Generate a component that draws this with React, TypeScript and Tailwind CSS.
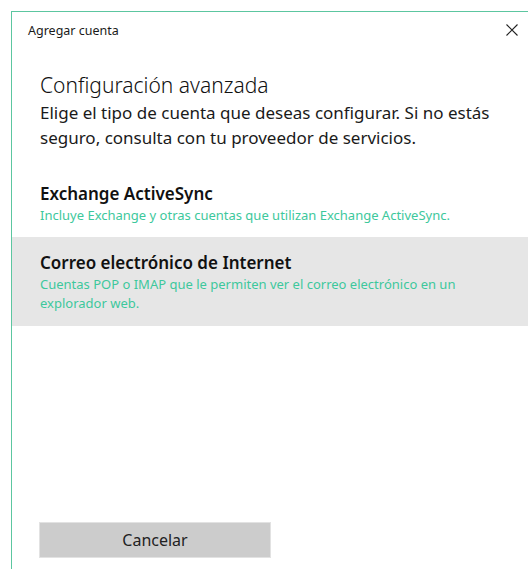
import React from 'react';

const font = { fontFamily: '"Noto Sans", "Open Sans", Arial, sans-serif' };

type AccountOption = {
  title: string;
  description: string;
  selected?: boolean;
};

const options: AccountOption[] = [
  {
    title: 'Exchange ActiveSync',
    description: 'Incluye Exchange y otras cuentas que utilizan Exchange ActiveSync.',
  },
  {
    title: 'Correo electrónico de Internet',
    description:
      'Cuentas POP o IMAP que le permiten ver el correo electrónico en un explorador web.',
    selected: true,
  },
];

const CloseIcon = () => (
  <svg width="12" height="12" viewBox="0 0 12 12" fill="none">
    <path d="M0.5 0.5L11.5 11.5M11.5 0.5L0.5 11.5" stroke="#222" strokeWidth="1.1" />
  </svg>
);

export default function App() {
  return (
    <div className="w-[528px] h-[569px] bg-white pl-[11px] pt-[11px] overflow-hidden" style={font}>
      <div className="h-full border-l border-t border-[#5cc6a0] flex flex-col">
        {/* Title bar */}
        <div className="h-[37px] flex items-start justify-between pl-4 pr-[10px] pt-[10px]">
          <span className="text-[12.5px] leading-[17px] text-[#1a1a1a]">Agregar cuenta</span>
          <span className="mt-[2px]">
            <CloseIcon />
          </span>
        </div>

        {/* Heading */}
        <div className="pl-[28px] pr-6 pt-[23px]">
          <h1 className="text-[21px] leading-[26px] font-light text-[#111]">Configuración avanzada</h1>
          <p className="mt-[2px] text-[17px] leading-[25px] text-[#1a1a1a]">
            Elige el tipo de cuenta que deseas configurar. Si no estás seguro, consulta con tu
            proveedor de servicios.
          </p>
        </div>

        {/* Account types */}
        <div className="mt-[32px] flex flex-col">
          {options.map((opt) => (
            <div
              key={opt.title}
              className={`pl-[28px] pr-10 ${
                opt.selected ? 'bg-[#e6e6e6] pt-[14px] pb-[13px]' : 'pb-[13px]'
              }`}
            >
              <div className="text-[17px] leading-[23px] font-semibold text-[#111]">{opt.title}</div>
              <div
                className={`mt-px text-[13px] text-[#3dc89c] ${
                  opt.selected ? 'leading-[19px]' : 'leading-[18px]'
                }`}
              >
                {opt.description}
              </div>
            </div>
          ))}
        </div>

        <div className="flex-1" />

        {/* Footer */}
        <div className="pl-[27px] pb-[11px]">
          <button
            type="button"
            className="w-[232px] h-[36px] bg-[#cccccc] border border-[#e2e2e2] text-[16px] leading-none text-[#222]"
          >
            Cancelar
          </button>
        </div>
      </div>
    </div>
  );
}
